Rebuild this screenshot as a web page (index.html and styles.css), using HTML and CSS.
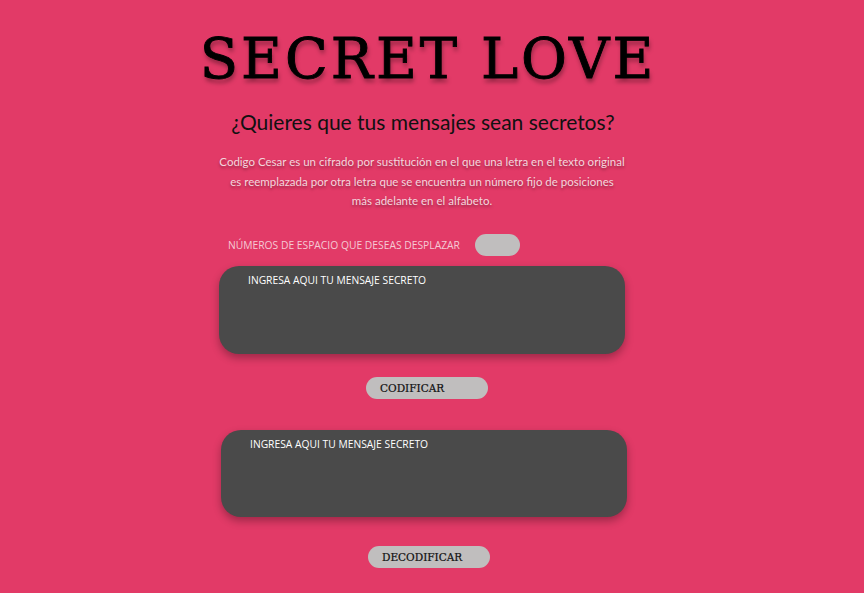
FILE: index.html
```html
<!DOCTYPE html>
<html lang="es">
<head>
<meta charset="utf-8">
<title>Secret Love</title>
<link rel="stylesheet" href="styles.css">
</head>
<body>
<main class="page">
  <h1 class="title">SECRET LOVE</h1>
  <h2 class="subtitle">¿Quieres que tus mensajes sean secretos?</h2>
  <p class="intro">Codigo Cesar es un cifrado por sustitución en el que una letra en el texto original es reemplazada por otra letra que se encuentra un número fijo de posiciones más adelante en el alfabeto.</p>
  <div class="offset-row">
    <label class="offset-label" for="offset">NÚMEROS DE ESPACIO QUE DESEAS DESPLAZAR</label>
    <input class="offset-input" id="offset" type="text">
  </div>
  <textarea class="message" placeholder="INGRESA AQUI TU MENSAJE SECRETO"></textarea>
  <button class="action action-encode" type="button">CODIFICAR</button>
  <textarea class="message message-second" placeholder="INGRESA AQUI TU MENSAJE SECRETO"></textarea>
  <button class="action action-decode" type="button">DECODIFICAR</button>
</main>
</body>
</html>
```
FILE: styles.css
```css
html, body {
  margin: 0;
  padding: 0;
  background: #e23a67;
}
body {
  min-height: 593px;
  overflow: hidden;
}
.page {
  width: 406px;
  margin: 0 auto;
  padding: 0 20px 0 0;
  display: flex;
  flex-direction: column;
  align-items: center;
}
.title {
  margin: 26px 0 0 12px;
  font-family: "DejaVu Serif", serif;
  font-weight: normal;
  font-size: 56px;
  line-height: 66px;
  letter-spacing: 3px;
  color: #000;
  white-space: nowrap;
  -webkit-text-stroke: 0.9px #000;
  text-shadow: 1px 4px 4px rgba(0,0,0,0.35);
}
.subtitle {
  margin: 16px 0 0 2px;
  font-family: "Lato", sans-serif;
  font-weight: normal;
  font-size: 21px;
  line-height: 28px;
  color: #111;
  white-space: nowrap;
}
.intro {
  margin: 16px 0 0;
  font-family: "Lato", sans-serif;
  font-size: 11.5px;
  line-height: 19.5px;
  color: #f3d6dd;
  text-align: center;
  text-shadow: 0 2px 3px rgba(0,0,0,0.35);
}
.offset-row {
  align-self: stretch;
  display: flex;
  align-items: center;
  gap: 15px;
  padding-left: 9px;
  margin-top: 23px;
}
.offset-label {
  font-family: "Open Sans", sans-serif;
  font-size: 10.3px;
  color: #f5c9d4;
}
.offset-input {
  width: 45px;
  height: 22px;
  box-sizing: border-box;
  border: none;
  border-radius: 11px;
  background: #c0bebe;
  outline: none;
}
.message {
  align-self: stretch;
  box-sizing: border-box;
  height: 88px;
  margin-top: 10px;
  padding: 7px 29px;
  border: none;
  border-radius: 20px;
  background: #4a4a4a;
  color: #fff;
  resize: none;
  font-family: "Open Sans", sans-serif;
  font-size: 10.3px;
  box-shadow: 0 4px 8px rgba(0,0,0,0.3);
  outline: none;
}
.message::placeholder {
  color: #fff;
  opacity: 1;
}
.message-second {
  margin-top: 31px;
  transform: translateX(2px);
  height: 87px;
}
.action {
  width: 122px;
  height: 22px;
  box-sizing: border-box;
  border: none;
  border-radius: 11px;
  background: #c0bebe;
  text-align: left;
  padding: 0 0 0 14px;
  font-family: "DejaVu Serif", serif;
  font-size: 10.5px;
  color: #111;
  -webkit-text-stroke: 0.2px #111;
}
.action-encode {
  margin-top: 23px;
  transform: translateX(5px);
}
.action-decode {
  margin-top: 29px;
  transform: translateX(7px);
}
```
